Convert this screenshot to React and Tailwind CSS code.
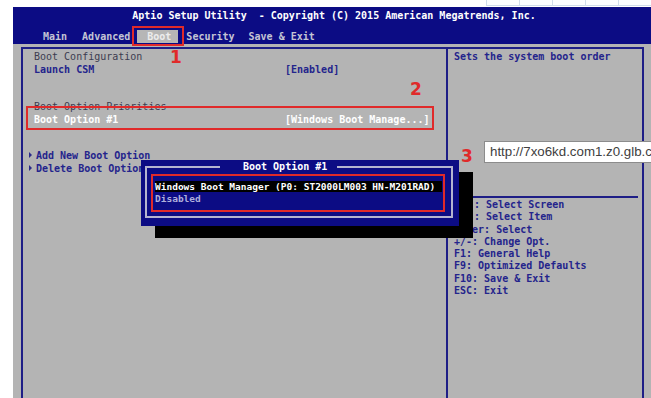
const HELP = [
  ["→←", ": Select Screen"],
  ["↑↓", ": Select Item"],
  ["", "Enter: Select"],
  ["", "+/-: Change Opt."],
  ["", "F1: General Help"],
  ["", "F9: Optimized Defaults"],
  ["", "F10: Save & Exit"],
  ["", "ESC: Exit"],
];

function Tri() {
  return (
    <span className="w-[8px] flex items-center mb-[2px]">
      <span className="ml-[1px] w-0 h-0 border-y-[3px] border-y-transparent border-l-[3px] border-l-[#2a2a8a]" />
    </span>
  );
}

export default function App() {
  return (
    <div className="relative w-[651px] h-[398px] overflow-hidden bg-white font-['DejaVu_Sans_Mono',monospace]">
      {/* top strip */}
      <div className="h-[7px] flex justify-end">
        <div className="flex h-[6px] border-b border-[#cfdcea] bg-[#fbfdff]">
          <div className="w-[33px] border-l border-[#cfdcea]" />
          <div className="w-[33px] border-l border-[#cfdcea]" />
          <div className="w-[33px] border-l border-[#cfdcea]" />
          <div className="w-[33px] border-l border-[#cfdcea]" />
          <div className="w-[33px] border-l border-[#cfdcea]" />
        </div>
      </div>

      {/* BIOS screen */}
      <div className="ml-[13px] h-[391px] flex flex-col">
        <div className="h-[37px] bg-[#0c0c84] flex flex-col">
          <div className="pt-[3px] pl-[4px] h-[15px] leading-[12px] text-[10px] font-bold text-white text-center whitespace-pre">
            Aptio Setup Utility  - Copyright (C) 2015 American Megatrends, Inc.
          </div>
          <div className="mt-[8px] h-[13px] flex text-[10px] leading-[13px] font-bold text-[#c4c4d4] whitespace-pre">
            <span className="ml-[30px]">Main</span>
            <span className="ml-[15px]">Advanced</span>
            <span className="ml-[7px] pl-[10px] pr-[7px] bg-[#b6b6b6] text-[#ececec]">Boot</span>
            <span className="ml-[8px]">Security</span>
            <span className="ml-[14px]">Save &amp; Exit</span>
          </div>
        </div>

        <div className="flex-1 bg-[#b4b4b4] pt-[3px] pl-[8px] pr-[7px]">
          <div className="h-full flex border-t-2 border-l-2 border-r-2 border-[#1e1e86]">
            {/* left */}
            <div className="w-[423px] pl-[11px] pt-[2px] text-[10px] leading-[12.5px] whitespace-pre">
              <div className="text-[#3c3c50]">Boot Configuration</div>
              <div className="flex font-bold text-[#24248c]">
                <span className="w-[251px]">Launch CSM</span>
                <span>[Enabled]</span>
              </div>
              <div className="h-[25px]" />
              <div className="text-[#3c3c50]">Boot Option Priorities</div>
              <div className="flex font-bold text-white">
                <span className="w-[251px]">Boot Option #1</span>
                <span>[Windows Boot Manage...]</span>
              </div>
              <div className="h-[24px]" />
              <div className="flex -ml-[6px] font-bold text-[#24248c]">
                <Tri />
                <span>Add New Boot Option</span>
              </div>
              <div className="flex -ml-[6px] font-bold text-[#24248c]">
                <Tri />
                <span>Delete Boot Option</span>
              </div>
            </div>

            {/* right */}
            <div className="flex-1 border-l-2 border-[#1e1e86] flex flex-col text-[10px] font-bold text-[#24248c] whitespace-pre">
              <div className="h-[147px] pl-[6px] pt-[2px] leading-[12.5px]">Sets the system boot order</div>
              <div className="ml-[2px] mr-[4px] h-[2px] bg-[#1e1e86]" />
              <div className="pl-[6px] pt-[1px] leading-[12.3px]">
                {HELP.map(([p, t], i) => (
                  <div key={i} className="flex">
                    {p ? <span className="w-[20px]">{p}</span> : null}
                    <span>{t}</span>
                  </div>
                ))}
              </div>
            </div>
          </div>
        </div>
      </div>

      {/* popup shadow */}
      <div className="absolute left-[155px] top-[172px] w-[318px] h-[66px] bg-black" />
      {/* popup */}
      <div className="absolute left-[141px] top-[160px] w-[318px] h-[66px] bg-[#0c0c84] pl-[4px] pt-[6px] text-[9.5px] font-bold whitespace-pre">
        <div className="relative w-[308px] h-[52px] border-2 border-[#b4b4d0] pl-[4px] pt-[6px]">
          <div className="absolute left-[73px] -top-[7px] w-[117px] h-[12px] bg-[#0c0c84] pl-[23px] text-[10px] leading-[12px] text-white">
            Boot Option #1
          </div>
          <div className="w-[294px] h-[38px] border-2 border-[#e02a2a] pl-[2px] pt-[5px]">
            <div className="w-[287px] h-[11px] bg-black text-white leading-[11px]">
              Windows Boot Manager (P0: ST2000LM003 HN-M201RAD)
            </div>
            <div className="mt-[1px] leading-[12px] text-[#b0b0dc]">Disabled</div>
          </div>
        </div>
      </div>

      {/* tooltip */}
      <div className="absolute left-[484px] top-[141px] h-[22px] w-[180px] border border-[#8c8c8c] bg-white pl-[5px] font-['Liberation_Sans',Arial,sans-serif] text-[13.3px] leading-[20px] text-[#404040] whitespace-nowrap">
        http://7xo6kd.com1.z0.glb.c
      </div>

      {/* red annotations */}
      <div className="absolute left-[132px] top-[26px] w-[52px] h-[20px] border-2 border-[#e02a2a]" />
      <div className="absolute left-[26px] top-[106px] w-[408px] h-[24px] border-2 border-[#e02a2a]" />
      <div className="absolute left-[170px] top-[49px] font-['DejaVu_Sans',sans-serif] font-bold text-[17px] leading-[17px] text-[#e02a2a]">1</div>
      <div className="absolute left-[410px] top-[81px] font-['DejaVu_Sans',sans-serif] font-bold text-[17px] leading-[17px] text-[#e02a2a]">2</div>
      <div className="absolute left-[461px] top-[148px] font-['DejaVu_Sans',sans-serif] font-bold text-[17px] leading-[17px] text-[#e02a2a]">3</div>
    </div>
  );
}
